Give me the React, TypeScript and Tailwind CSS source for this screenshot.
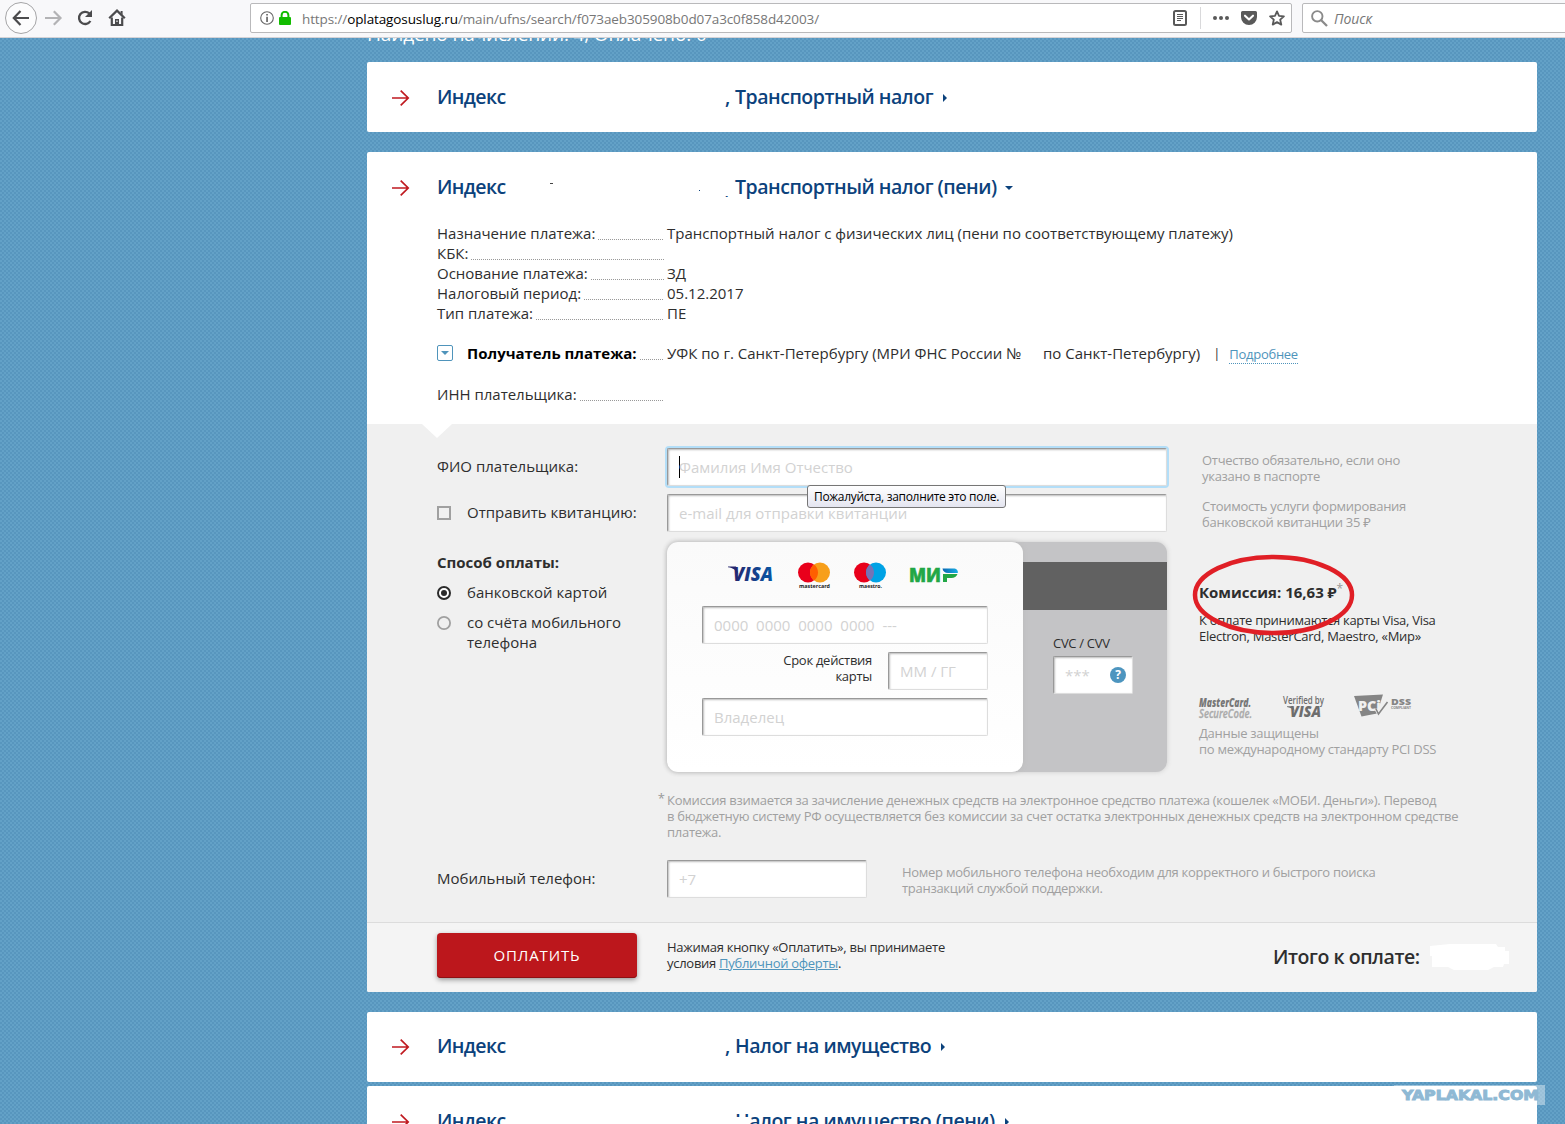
import type { ReactNode } from "react";

const CHECKER =
  "bg-[repeating-conic-gradient(#5896be_0_25%,#63a1c7_0_50%)] bg-[size:4px_4px]";

interface DetailRow {
  label: string;
  value: string;
}

const details: DetailRow[] = [
  {
    label: "Назначение платежа:",
    value: "Транспортный налог с физических лиц (пени по соответствующему платежу)",
  },
  { label: "КБК:", value: "" },
  { label: "Основание платежа:", value: "ЗД" },
  { label: "Налоговый период:", value: "05.12.2017" },
  { label: "Тип платежа:", value: "ПЕ" },
];

const BrowserBar = () => (
  <header className="flex h-[38px] w-full shrink-0 items-start border-b border-[#d5d3d6] bg-[#f8f8fa] text-[#4b4b4d]">
    <div className="flex h-9 w-[250px] shrink-0 items-center pl-[5px]">
      <div className="flex size-8 items-center justify-center rounded-full border border-[#a5a5a7] bg-[#fcfcfd]">
        <svg width="18" height="18" viewBox="0 0 18 18" fill="none" stroke="currentColor" strokeWidth="2.2">
          <path d="M17 9H2M8.5 2 1.8 9l6.7 7" />
        </svg>
      </div>
      <svg className="ml-2 text-[#b3b3b5]" width="18" height="18" viewBox="0 0 18 18" fill="none" stroke="currentColor" strokeWidth="2.2">
        <path d="M0 9h15M8.8 2.3 15.5 9l-6.7 6.7" />
      </svg>
      <svg className="ml-[13px]" width="18" height="18" viewBox="0 0 18 18" fill="none" stroke="currentColor" strokeWidth="2.3">
        <path d="M13.3 4.4A6.1 6.1 0 1 0 14.4 12" />
        <path d="M16 1v7H9z" fill="currentColor" stroke="none" />
      </svg>
      <svg className="ml-[14px]" width="18" height="18" viewBox="0 0 18 18">
        <path d="M1.2 9.3 9 1.6l7.8 7.7" fill="none" stroke="currentColor" strokeWidth="2.2" />
        <path d="M12.6 2h2v4l-2-2z" fill="currentColor" />
        <path d="M3.8 8.4v7.6h10.4V8.4" fill="none" stroke="currentColor" strokeWidth="2.2" />
        <path d="M7 10h4v6H7z" fill="currentColor" />
        <path d="M8.4 11.5h1.2v1.5H8.4z" fill="#fff" />
      </svg>
    </div>
    <div className="mt-[3px] flex h-[30px] w-[1042px] shrink-0 items-center rounded-[2px] border border-[#b9b9bb] bg-white pl-[9px]">
      <svg width="14" height="14" viewBox="0 0 14 14">
        <circle cx="7" cy="7" r="6.3" fill="none" stroke="#666" strokeWidth="1.1" />
        <path d="M6.2 3h1.7v1.6H6.2zM6.2 5.8h1.7V11H6.2z" fill="#666" />
      </svg>
      <svg className="ml-[5px]" width="12" height="14" viewBox="0 0 12 14">
        <rect x="0" y="6" width="12" height="8" rx="1" fill="#12bc00" />
        <path d="M2.6 7V4.2a3.4 3.4 0 0 1 6.8 0V7" fill="none" stroke="#12bc00" strokeWidth="2" />
      </svg>
      <span className="mt-[2px] ml-[11px] text-[13.5px] tracking-[-0.11px] whitespace-nowrap text-[#777]">
        https://<span className="text-black">oplatagosuslug.ru</span>
        /main/ufns/search/f073aeb305908b0d07a3c0f858d42003/
      </span>
      <div className="ml-auto flex items-center pr-[6px] text-[#595959]">
        <svg width="14" height="16" viewBox="0 0 14 16" fill="none" stroke="currentColor">
          <rect x="1" y="1" width="12" height="14" rx="1.5" strokeWidth="2" />
          <path d="M4 4.5h6M4 6.5h6M4 8.5h6M4 10.5h4" strokeWidth="1" />
        </svg>
        <div className="ml-[13px] h-[22px] w-px bg-[#d9d9db]" />
        <svg className="ml-3" width="16" height="6" viewBox="0 0 16 6" fill="currentColor">
          <circle cx="2" cy="3" r="2" />
          <circle cx="8" cy="3" r="2" />
          <circle cx="14" cy="3" r="2" />
        </svg>
        <svg className="ml-3" width="16" height="14" viewBox="0 0 16 14">
          <path d="M1.5 0h13A1.5 1.5 0 0 1 16 1.5V6A8 8 0 0 1 0 6V1.5A1.5 1.5 0 0 1 1.5 0z" fill="currentColor" />
          <path d="m4 4.7 4 3.8 4-3.8" fill="none" stroke="#fff" strokeWidth="2.1" strokeLinecap="round" strokeLinejoin="round" />
        </svg>
        <svg className="ml-3" width="16" height="16" viewBox="0 0 16 16" fill="none" stroke="currentColor" strokeWidth="1.8" strokeLinejoin="round">
          <path d="m8 1.4 2 4.5 4.9.5-3.7 3.3 1.1 4.9L8 12.1l-4.3 2.5 1.1-4.9L1.1 6.4 6 5.9z" />
        </svg>
      </div>
    </div>
    <div className="mt-[3px] ml-[10px] flex h-[30px] w-[270px] shrink-0 items-center rounded-[2px] border border-[#b9b9bb] bg-white pl-2">
      <svg width="17" height="17" viewBox="0 0 17 17" fill="none" stroke="#8a8a8a">
        <circle cx="6.3" cy="6.3" r="5.2" strokeWidth="1.9" />
        <path d="m10 10 6 6" strokeWidth="2.3" />
      </svg>
      <span className="mt-[2px] ml-[6px] text-[14px] tracking-[-0.1px] text-[#777] italic">Поиск</span>
    </div>
  </header>
);

interface HeadingProps {
  comma?: boolean;
  open?: boolean;
  children: ReactNode;
}

const CardHeading = ({ comma = true, open = false, children }: HeadingProps) => (
  <div className="flex h-[70px] items-center pl-[25px] text-[19.5px] leading-[28px] font-semibold text-[#0c427c]">
    <svg className="mt-[2px] w-[45px] shrink-0" width="45" height="18" viewBox="0 0 45 18" fill="none" stroke="#c01a20" strokeWidth="1.7">
      <path d="M0 9h16M8.7 1.7 16.2 9l-7.5 7.3" />
    </svg>
    <span className="w-[288px] shrink-0 tracking-[-0.6px]">Индекс</span>
    <span className="w-[10px] shrink-0">{comma ? "," : ""}</span>
    <span className="tracking-[-0.47px] whitespace-nowrap">{children}</span>
    {open ? (
      <svg className="mt-[2px] ml-[8px]" width="8" height="4" viewBox="0 0 8 4" fill="currentColor">
        <path d="M0 0h8L4 4z" />
      </svg>
    ) : (
      <svg className="mt-[2px] ml-[10px]" width="4" height="8" viewBox="0 0 4 8" fill="currentColor">
        <path d="M0 0v8l4-4z" />
      </svg>
    )}
  </div>
);

const Leader = () => (
  <span className="mt-[16px] ml-[3px] h-px flex-1 bg-[repeating-linear-gradient(90deg,#999_0_1px,transparent_1px_2px)]" />
);

interface FieldProps {
  placeholder: string;
  className: string;
  focused?: boolean;
}

const Field = ({ placeholder, className, focused = false }: FieldProps) => (
  <div
    className={`flex h-[38px] shrink-0 items-center border border-t-[#999] border-r-[#ddd] border-b-[#ddd] border-l-[#999] bg-white pl-[11px] text-[15px] whitespace-pre text-[#d2d2d2] rounded-[2px] ${
      focused
        ? "shadow-[0_0_0_2px_#b3def8,inset_1px_1px_2px_#bbb]"
        : "shadow-[inset_1px_1px_2px_#bbb]"
    } ${className}`}
  >
    {focused && <span className="-mr-px h-[22px] w-px bg-black" />}
    {placeholder}
  </div>
);

const PaymentLogos = () => (
  <svg className="ml-[61px] overflow-visible" width="232" height="28" viewBox="0 0 232 28">
    <defs>
      <linearGradient id="visa">
        <stop offset="0" stopColor="#25256d" />
        <stop offset="1" stopColor="#0857a5" />
      </linearGradient>
      <linearGradient id="mir">
        <stop offset="0" stopColor="#0b67b2" />
        <stop offset="1" stopColor="#16aee5" />
      </linearGradient>
    </defs>
    <text x="5" y="19" fill="url(#visa)" fontFamily="Open Sans" fontSize="20" fontWeight="800" fontStyle="italic" textLength="40" lengthAdjust="spacingAndGlyphs">
      VISA
    </text>
    <path d="M0 4.5h8l2.500 8C8.500 8 5 6 0 5.300z" fill="#25256d" />
    <circle cx="80" cy="10.5" r="10" fill="#e9001b" />
    <circle cx="92" cy="10.5" r="10" fill="#f79f1a" />
    <path d="M86 2.5a10 10 0 0 1 0 16 10 10 0 0 1 0-16z" fill="#ff5f00" />
    <text x="71" y="25.5" fill="#222" fontFamily="Open Sans" fontSize="5.5" fontWeight="700" textLength="31" lengthAdjust="spacingAndGlyphs">
      mastercard
    </text>
    <circle cx="136" cy="10.5" r="10" fill="#e9001b" />
    <circle cx="148" cy="10.5" r="10" fill="#00a2e5" />
    <path d="M142 2.5a10 10 0 0 1 0 16 10 10 0 0 1 0-16z" fill="#7673b5" />
    <text x="131" y="25.5" fill="#222" fontFamily="Open Sans" fontSize="5.5" fontWeight="700" textLength="23" lengthAdjust="spacingAndGlyphs">
      maestro.
    </text>
    <text x="181" y="20" fill="#22a746" stroke="#22a746" strokeWidth="0.5" fontFamily="Open Sans" fontSize="18.5" fontWeight="800" textLength="32" lengthAdjust="spacingAndGlyphs">
      МИ
    </text>
    <path d="M215 20v-8h14.500c-1 2.500-3.200 4-6 4H219v4z" fill="#22a746" />
    <path d="M214.500 6.500h11c3 0 4.800 2 4.300 4.500h-9.800c-3.200 0-5-1.600-5.500-4.500z" fill="url(#mir)" />
  </svg>
);

const SecurityLogos = () => (
  <svg className="overflow-visible" width="214" height="26" viewBox="0 0 214 26" fontFamily="Open Sans">
    <text x="0" y="12.5" fill="#777" fontSize="12" fontWeight="800" fontStyle="italic" textLength="52" lengthAdjust="spacingAndGlyphs">
      MasterCard.
    </text>
    <text x="0" y="23.5" fill="#aaa" stroke="#aaa" strokeWidth="0.3" fontSize="12" fontWeight="600" fontStyle="italic" textLength="53" lengthAdjust="spacingAndGlyphs">
      SecureCode.
    </text>
    <text x="84" y="10" fill="#6d6d6d" fontSize="11" fontWeight="600" textLength="41" lengthAdjust="spacingAndGlyphs">
      Verified by
    </text>
    <text x="91" y="23" fill="#6d6d6d" fontSize="15" fontWeight="800" fontStyle="italic" textLength="31" lengthAdjust="spacingAndGlyphs">
      VISA
    </text>
    <path d="M88 12.2h6l2 5.500c-1-2.500-4-4-8-4.700z" fill="#6d6d6d" />
    <path d="m155 2 29-1.500-6 19-15.500 3z" fill="#858585" />
    <text x="159" y="16.5" fill="#f0f0f0" fontSize="14" fontWeight="800" textLength="23" lengthAdjust="spacingAndGlyphs">
      PCi
    </text>
    <path d="m177 15 2.500 5 9-12" fill="none" stroke="#f0f0f0" strokeWidth="3" />
    <path d="m177 15 2.500 5 9-12" fill="none" stroke="#858585" strokeWidth="1.6" />
    <text x="192" y="10.5" fill="#858585" fontSize="9" fontWeight="800" textLength="20" lengthAdjust="spacingAndGlyphs">
      DSS
    </text>
    <text x="192" y="14.5" fill="#858585" fontSize="3.5" fontWeight="700" textLength="20" lengthAdjust="spacingAndGlyphs">
      COMPLIANT
    </text>
  </svg>
);

const CardForm = () => (
  <div className="flex h-[230px] w-[500px] rounded-[11px] bg-[#c4c4c6] shadow-[0_0_5px_#ccc]">
    <div className="w-[356px] shrink-0 rounded-[11px] bg-linear-to-b from-[#fafafa] to-white pt-5 shadow-[0_0_5px_#bbb]">
      <PaymentLogos />
      <div className="mx-[35px] mt-4 flex flex-col gap-2">
        <Field className="w-[286px]" placeholder="0000  0000  0000  0000  ---" />
        <div className="flex items-center justify-end">
          <span className="mr-4 -mt-[6px] text-right text-[13px] leading-4 tracking-[-0.28px]">
            Срок действия
            <br />
            карты
          </span>
          <Field className="w-[100px]" placeholder="ММ / ГГ" />
        </div>
        <Field className="w-[286px]" placeholder="Владелец" />
      </div>
    </div>
    <div className="flex-1 pt-5">
      <div className="h-12 bg-[#616161]" />
      <div className="pt-[25px] pl-[30px]">
        <div className="text-[13px] leading-4 tracking-[-0.3px]">CVC / CVV</div>
        <div className="mt-[5px] flex w-20 items-center">
          <Field className="w-20" placeholder="***" />
          <span className="-ml-[23px] flex size-4 shrink-0 items-center justify-center rounded-full bg-[#4d95bf] text-[12px] font-bold text-white">
            ?
          </span>
        </div>
      </div>
    </div>
  </div>
);

const Hint = ({ children, className = "" }: { children: ReactNode; className?: string }) => (
  <p className={`text-[13px] leading-4 tracking-[-0.28px] whitespace-nowrap text-[#a0a0a0] ${className}`}>{children}</p>
);

const PaymentForm = () => (
  <div className="relative h-[498px] bg-[#f0f0f0] pt-6 pl-[70px]">
    <svg className="absolute top-0 left-[55px]" width="30" height="14" viewBox="0 0 30 14">
      <path d="M0 0h30L15 14z" fill="#fff" />
    </svg>
    <div className="flex h-[38px]">
      <div className="w-[230px] pt-[8px]">ФИО плательщика:</div>
      <Field focused className="w-[500px]" placeholder="Фамилия Имя Отчество" />
      <Hint className="mt-[4px] ml-[35px]">
        Отчество обязательно, если оно
        <br />
        указано в паспорте
      </Hint>
    </div>
    <div className="relative mt-2 flex h-[38px]">
      <div className="flex w-[230px] items-start pt-[8px]">
        <span className="mt-[4px] mr-4 size-[14px] border-2 border-[#a0a0a0]" />
        Отправить квитанцию:
      </div>
      <Field className="w-[500px]" placeholder="e-mail для отправки квитанции" />
      <Hint className="mt-[4px] ml-[35px]">
        Стоимость услуги формирования
        <br />
        банковской квитанции 35 ₽
      </Hint>
      <div className="absolute -top-[9px] left-[370px] flex h-[23px] w-[199px] items-center justify-center rounded-[3px] border border-[#767676] bg-linear-to-b from-white to-[#e4e5f0] text-[12px] tracking-[-0.3px] whitespace-nowrap text-black">
        Пожалуйста, заполните это поле.
      </div>
    </div>
    <div className="relative mt-[10px] flex h-[230px]">
      <div className="w-[230px] pt-[10px]">
        <div className="font-bold">Способ оплаты:</div>
        <div className="mt-[10px] flex items-start">
          <svg className="mt-[4px] mr-4" width="14" height="14" viewBox="0 0 14 14">
            <circle cx="7" cy="7" r="6" fill="#fff" stroke="#2b2b2b" strokeWidth="2" />
            <circle cx="7" cy="7" r="3" fill="#2b2b2b" />
          </svg>
          банковской картой
        </div>
        <div className="mt-[10px] flex items-start">
          <svg className="mt-[4px] mr-4" width="14" height="14" viewBox="0 0 14 14">
            <circle cx="7" cy="7" r="6.1" fill="none" stroke="#a0a0a0" strokeWidth="1.8" />
          </svg>
          <span>
            со счёта мобильного
            <br />
            телефона
          </span>
        </div>
      </div>
      <CardForm />
      <div className="ml-8 pt-[40px] text-[13px] leading-4 whitespace-nowrap">
        <div className="h-5 text-[15px] leading-5 font-bold">
          Комиссия: 16,63 ₽<span className="relative -top-[5px] text-[12px] font-normal text-[#999]">*</span>
        </div>
        <p className="mt-[10px] tracking-[-0.28px]">
          К оплате принимаются карты Visa, Visa
          <br />
          Electron, MasterCard, Maestro, «Мир»
        </p>
        <div className="mt-[50px] h-[25px]">
          <SecurityLogos />
        </div>
        <Hint className="mt-[6px]">
          Данные защищены
          <br />
          по международному стандарту PCI DSS
        </Hint>
      </div>
      {/* hand-drawn mark around the commission */}
      <svg className="absolute top-[12px] left-[755px]" width="164" height="83" viewBox="0 0 164 83">
        <ellipse cx="81.5" cy="41" rx="78.5" ry="38" fill="none" stroke="#e01f26" strokeWidth="4.5" />
      </svg>
    </div>
    <div className="mt-5 flex h-[68px]">
      <span className="w-[230px] pr-[2px] text-right text-[13px] leading-3 text-[#999]">*</span>
      <Hint>
        Комиссия взимается за зачисление денежных средств на электронное средство платежа (кошелек «МОБИ. Деньги»). Перевод
        <br />
        в бюджетную систему РФ осуществляется без комиссии за счет остатка электронных денежных средств на электронном средстве
        <br />
        платежа.
      </Hint>
    </div>
    <div className="flex h-[38px]">
      <div className="w-[230px] pt-[8px]">Мобильный телефон:</div>
      <Field className="w-[200px]" placeholder="+7" />
      <Hint className="mt-[4px] ml-[35px]">
        Номер мобильного телефона необходим для корректного и быстрого поиска
        <br />
        транзакций службой поддержки.
      </Hint>
    </div>
  </div>
);

const FormFooter = () => (
  <div className="flex h-[70px] items-start rounded-b-[2px] border-t border-[#dcdcdc] bg-[#f4f4f4] pt-[10px] pl-[70px]">
    <button className="h-[45px] w-[200px] rounded-[4px] bg-[#bc171c] pb-[2px] text-[15px] tracking-[0.85px] text-white shadow-[0_2px_5px_#999,inset_0_-1px_0_#8d1013]">
      ОПЛАТИТЬ
    </button>
    <p className="mt-[6px] ml-[30px] w-[606px] text-[13px] leading-4 tracking-[-0.28px]">
      Нажимая кнопку «Оплатить», вы принимаете
      <br />
      условия <a className="text-[#4f94bb] underline">Публичной оферты</a>.
    </p>
    <span className="mt-[10px] w-[157px] text-[19.5px] leading-7 font-semibold tracking-[-0.45px] whitespace-nowrap">Итого к оплате:</span>
    <svg className="mt-[10px]" width="80" height="28" viewBox="0 0 80 28">
      <path d="M0 3 20 1h46l2 3h7v4h4v13h-5l-1 3H64l-6 3H24l-6-3H2V13H0z" fill="#fff" />
    </svg>
  </div>
);

export default function App() {
  return (
    <div
      className={`relative flex h-[1124px] w-[1565px] flex-col overflow-hidden text-[15px] leading-5 text-[#2e2e2e] [font-family:'Open_Sans','Noto_Sans',sans-serif] ${CHECKER}`}
    >
      <BrowserBar />
      <main className="ml-[367px] w-[1170px]">
        <div className="h-6 overflow-hidden">
          <div className="-mt-4 text-[19px] leading-6 tracking-[-0.15px] whitespace-nowrap text-white">Найдено начислений: 4, Оплачено: 0</div>
        </div>
        <section className="rounded-[2px] bg-white">
          <CardHeading>Транспортный налог</CardHeading>
        </section>

        <section className="mt-5 rounded-[2px] bg-white">
          <div className="relative">
            <CardHeading open>Транспортный налог (пени)</CardHeading>
            {/* leftovers of the erased index number */}
            <div className="absolute top-7 left-[356px] h-4 w-[8px] bg-white" />
            <div className="absolute top-[31px] left-[183px] h-px w-[3px] bg-[#444]" />
            <div className="absolute top-[38px] left-[332px] h-px w-px bg-[#0c427c]" />
          </div>
          <div className="pt-px pl-[70px]">
            {details.map((row) => (
              <div key={row.label} className="flex h-5">
                <div className="mr-[3px] flex w-[227px] whitespace-nowrap">
                  {row.label}
                  <Leader />
                </div>
                <span className="whitespace-nowrap">{row.value}</span>
              </div>
            ))}
            <div className="mt-5 flex h-5">
              <div className="mr-[3px] flex w-[227px] font-bold whitespace-nowrap text-black">
                <span className="mt-[2px] mr-[14px] flex size-4 shrink-0 items-center justify-center rounded-[2px] border border-[#4f94bb]">
                  <svg width="8" height="4" viewBox="0 0 8 4">
                    <path d="M0 0h8L4 4z" fill="#4f94bb" />
                  </svg>
                </span>
                Получатель платежа:
                <Leader />
              </div>
              <span className="w-[376px] whitespace-nowrap">УФК по г. Санкт-Петербургу (МРИ ФНС России №</span>
              <span className="whitespace-nowrap">по Санкт-Петербургу)</span>
              <span className="ml-[13px] text-[13px]">|</span>
              <a className="ml-[9px] h-[21px] border-b border-dotted border-[#4f94bb] text-[13px] leading-[22px] tracking-[-0.28px] text-[#4f94bb]">Подробнее</a>
            </div>
            <div className="mt-[21px] mb-5 flex h-5 w-[227px] whitespace-nowrap">
              ИНН плательщика:
              <Leader />
            </div>
          </div>
          <PaymentForm />
          <FormFooter />
        </section>

        <section className="mt-5 flow-root h-[70px] rounded-[2px] bg-white">
          <div className="-mt-px">
            <CardHeading>Налог на имущество</CardHeading>
          </div>
        </section>
        <section className="relative mt-1 rounded-[2px] bg-white">
          <CardHeading comma={false}>Налог на имущество (пени)</CardHeading>
          <div className="absolute top-[31px] left-[367px] h-3 w-[15px] bg-white" />
        </section>
      </main>
      <div className="absolute top-[1085px] left-[1394px] bg-white/40">
        <svg className="block" width="151" height="20" viewBox="0 0 151 20">
          <text x="8" y="15" fill="#8fb9d4" stroke="#8fb9d4" strokeWidth="1" fontFamily="DejaVu Sans" fontWeight="700" fontSize="14.5" textLength="137" lengthAdjust="spacingAndGlyphs">
            YAPLAKAL.COM
          </text>
        </svg>
      </div>
    </div>
  );
}
